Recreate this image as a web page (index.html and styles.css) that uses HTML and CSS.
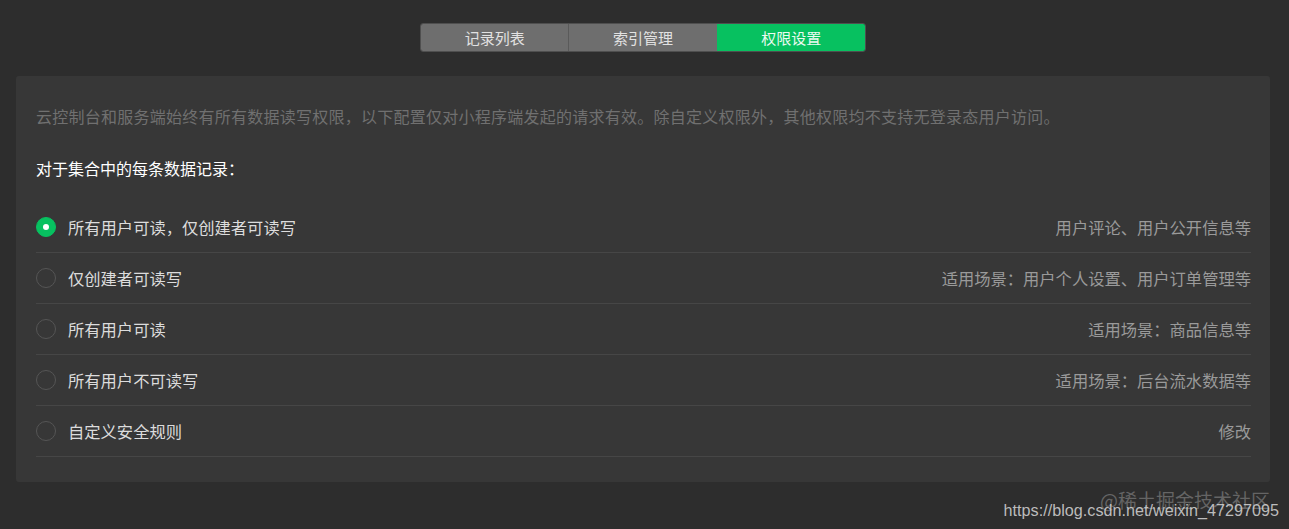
FILE: index.html
```html
<!DOCTYPE html>
<html lang="zh-CN">
<head>
    <meta charset="UTF-8">
    <title>权限设置</title>
    <link rel="stylesheet" href="styles.css">
</head>
<body>
    <div class="tabs">
        <div class="tab">记录列表</div>
        <div class="tab">索引管理</div>
        <div class="tab active">权限设置</div>
    </div>

    <div class="panel">
        <p class="desc">云控制台和服务端始终有所有数据读写权限，以下配置仅对小程序端发起的请求有效。除自定义权限外，其他权限均不支持无登录态用户访问。</p>
        <h3>对于集合中的每条数据记录：</h3>

        <div class="options">
            <label class="option">
                <span class="radio checked"></span>
                <span class="name">所有用户可读，仅创建者可读写</span>
                <span class="hint">用户评论、用户公开信息等</span>
            </label>
            <label class="option">
                <span class="radio"></span>
                <span class="name">仅创建者可读写</span>
                <span class="hint">适用场景：用户个人设置、用户订单管理等</span>
            </label>
            <label class="option">
                <span class="radio"></span>
                <span class="name">所有用户可读</span>
                <span class="hint">适用场景：商品信息等</span>
            </label>
            <label class="option">
                <span class="radio"></span>
                <span class="name">所有用户不可读写</span>
                <span class="hint">适用场景：后台流水数据等</span>
            </label>
            <label class="option">
                <span class="radio"></span>
                <span class="name">自定义安全规则</span>
                <span class="hint">修改</span>
            </label>
        </div>
    </div>

    <div class="watermark">
        <span class="wm-top">@稀土掘金技术社区</span>
        <span class="wm-url">https://blog.csdn.net/weixin_47297095</span>
    </div>
</body>
</html>
```

FILE: styles.css
```css
body {
    margin: 0;
    padding: 23px 19px 0 16px;
    background-color: #2d2d2d;
    font-family: "Noto Sans CJK SC", "Noto Sans", sans-serif;
    color: #ddd;
    height: 529px;
    box-sizing: border-box;
    overflow: hidden;
    position: relative;
}
.tabs {
    display: flex;
    width: 444px;
    margin: 0 auto 24px;
    border: 1px solid #4f4f4f;
    border-radius: 3px;
    overflow: hidden;
}
.tab {
    flex: 1;
    height: 27px;
    line-height: 27px;
    text-align: center;
    font-size: 15px;
    color: #e2e2e2;
    background-color: #6e6e6e;
    border-left: 1px solid #5a5a5a;
}
.tab:first-child {
    border-left: none;
}
.tab.active {
    background-color: #07c160;
    border-left-color: #07c160;
    color: #eafaf0;
}
.panel {
    background-color: #373737;
    border-radius: 3px;
    padding: 29px 19px 25px 20px;
}
.desc {
    margin: 0;
    font-size: 16px;
    line-height: 22px;
    color: #707070;
    letter-spacing: 0.25px;
}
h3 {
    margin: 30px 0 0;
    font-size: 16px;
    font-weight: normal;
    line-height: 22px;
    color: #fff;
}
.options {
    margin-top: 23px;
}
.option {
    display: flex;
    align-items: center;
    height: 50px;
    border-bottom: 1px solid #464646;
    font-size: 16.3px;
}
.radio {
    width: 18px;
    height: 18px;
    border: 1px solid #555;
    border-radius: 50%;
    margin-right: 12px;
    box-sizing: content-box;
    position: relative;
}
.radio.checked {
    background-color: #07c160;
    border-color: #07c160;
}
.radio.checked::after {
    content: "";
    position: absolute;
    left: 6px;
    top: 6px;
    width: 6px;
    height: 6px;
    border-radius: 50%;
    background-color: #fff;
}
.name {
    flex: 1;
    color: #dcdcdc;
}
.hint {
    color: #9a9a9a;
}
.watermark {
    position: absolute;
    right: 10px;
    bottom: 9px;
    display: flex;
    flex-direction: column;
    align-items: flex-end;
}
.wm-top {
    font-size: 19px;
    color: rgba(120, 120, 120, 0.75);
    margin-right: 9px;
    margin-bottom: -12px;
}
.wm-url {
    font-family: "Liberation Sans", Arial, sans-serif;
    font-size: 16.2px;
    color: rgba(215, 215, 215, 0.85);
}
```
